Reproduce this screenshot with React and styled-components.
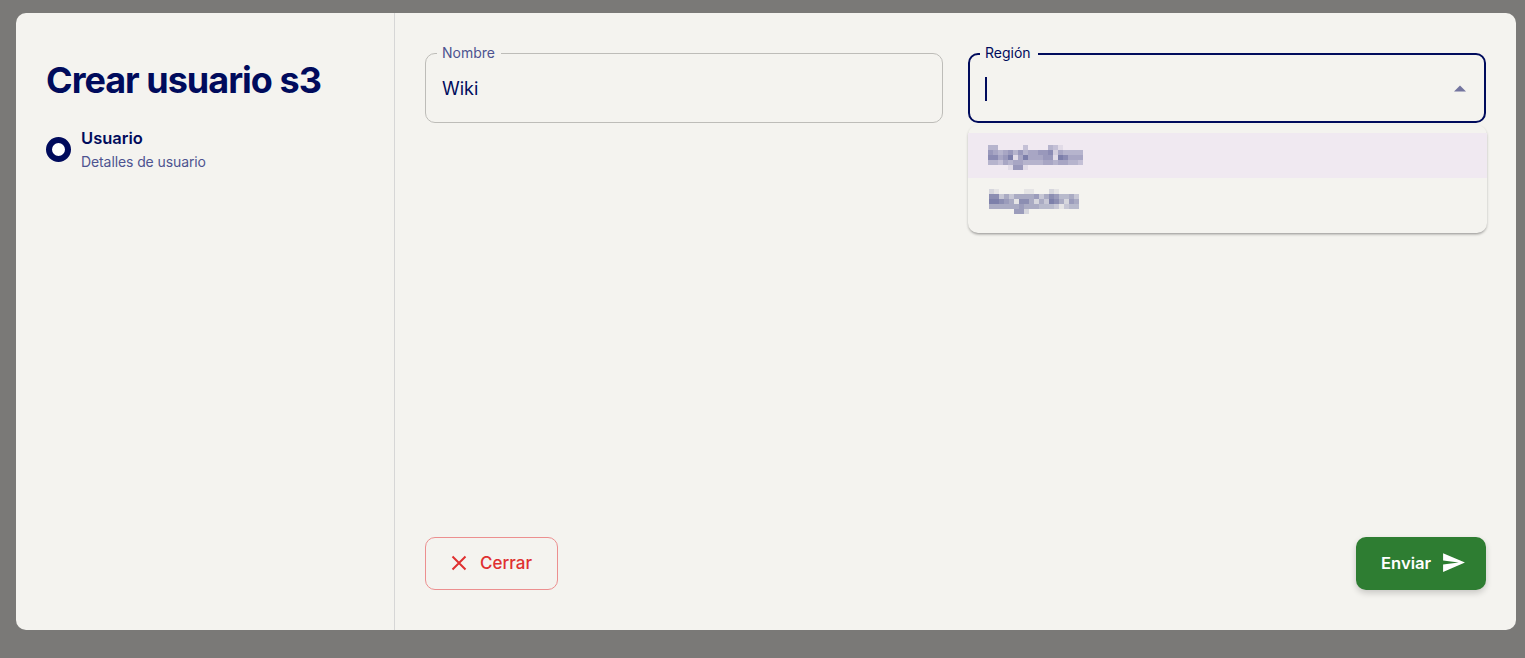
import React from "react";
import styled, { createGlobalStyle } from "styled-components";

const Global = createGlobalStyle`
  html, body { margin: 0; padding: 0; height: 100%; background: #7a7977; }
  * { box-sizing: border-box; }
  #root { height: 100%; }
`;
const Backdrop = styled.div`
  height: 658px; padding: 13px 9px 28px 16px; background: #7a7977; overflow: hidden;
  font-family: Inter, "Liberation Sans", sans-serif; color: #000b5c;
`;
const Modal = styled.div`
  display: flex; height: 617px; background: #f4f3ef; border-radius: 10px; overflow: hidden;
`;
const Sidebar = styled.aside`
  width: 379px; flex: none; padding: 44px 30px 0; border-right: 1px solid #d6d6d6;
`;
const Title = styled.h1`
  margin: 0; font-size: 36px; line-height: 46px; font-weight: 700; letter-spacing: -1px; color: #000b5c;
`;
const Step = styled.div`
  display: flex; align-items: center; gap: 10px; margin-top: 23px;
`;
const StepDot = styled.span`
  width: 25px; height: 25px; border-radius: 50%; border: 6px solid #000b5c; background: #fff; flex: none;
`;
const StepText = styled.div`display: flex; flex-direction: column;`;
const StepName = styled.span`font-size: 16.5px; line-height: 24px; font-weight: 600;`;
const StepHint = styled.span`font-size: 14px; line-height: 22px; letter-spacing: -0.1px; color: #4d5390; padding-top: 1px;`;
const Main = styled.main`
  flex: 1; display: flex; flex-direction: column; justify-content: space-between; padding: 30px 30px 40px;
`;
const Fields = styled.div`display: grid; grid-template-columns: 1fr 1fr; gap: 25px;`;
const Field = styled.div`position: relative;`;
const Box = styled.fieldset`
  margin: 0; height: 80px; min-width: 0; padding-top: 0; padding-bottom: 8px;
  border: ${p => (p.$focus ? "2px solid #000b5c" : "1px solid #bdbcb8")};
  border-radius: 10px; display: flex; align-items: center; justify-content: space-between;
  padding-left: ${p => (p.$focus ? "15px" : "16px")};
  padding-right: ${p => (p.$focus ? "19px" : "16px")};
`;
const Legend = styled.legend`
  padding: ${p => (p.$focus ? "0 7px 0 5px" : "0 6px 0 5px")}; margin-left: -5px; font-size: 14px; line-height: 20px;
  height: ${p => (p.$focus ? "22px" : "20px")};
  color: ${p => (p.$focus ? "#000b5c" : "#4d5390")};
`;
const Value = styled.span`font-size: 18px; line-height: 24px; color: #000b5c;`;
const Caret = styled.span`width: 2px; height: 24px; background: #000b5c;`;
const Arrow = styled.svg`width: 24px; height: 24px; fill: #73759f; flex: none; margin-right: -7px;`;
const Menu = styled.div`
  position: absolute; left: 0; right: -1px; top: 82px; padding: 8px 0 10px; background: #f4f3ef;
  border-radius: 10px; box-shadow: 0 2px 3px -1px rgba(0,0,0,.35), 0 1px 3px rgba(0,0,0,.1);
`;
const Option = styled.div`
  display: flex; align-items: flex-start; height: 45px; padding: ${p => p.$top}px 0 0 ${p => p.$left}px;
  background: ${p => (p.$active ? "#f0e9f1" : "transparent")};
`;
const Actions = styled.div`display: flex; justify-content: space-between;`;
const Button = styled.button`
  display: flex; align-items: center; height: 53px; border-radius: 10px; font: inherit; font-size: 17px;
  font-weight: 500; background: transparent;
`;
const CloseButton = styled(Button)`
  width: 133px; padding: 0 0 2px 24px; gap: 12px; color: #df3030; border: 1px solid #ec8f8f;
  font-weight: 450;
`;
const SendButton = styled(Button)`
  width: 130px; padding: 0 0 2px 25px; gap: 10px; color: #fff; background: #2e7d32; border: 0; font-size: 16.6px; font-weight: 600;
  box-shadow: 0 3px 6px rgba(0,0,0,.18);
`;
const Mosaic = ({ cells, w }) => (
  <svg width={w} height={cells.length * 5} viewBox={`0 0 ${w} ${cells.length * 5}`}>
    {cells.flatMap((row, y) =>
      row.map((o, x) => o ? <rect key={`${x}-${y}`} x={x * 5} y={y * 5} width="5" height="5" fill="#5f6398" opacity={o / 10} /> : null)
    )}
  </svg>
);
const r1 = [
  [4,4,0,0,0,0,0,3,0,0,0,0,4,3,1,0,0,0,0],
  [6,5,4,5,6,4,6,4,5,5,6,6,7,2,5,4,4,4,4],
  [7,7,5,6,8,1,5,8,5,5,5,6,6,1,8,7,5,5,5],
  [4,4,3,5,4,5,5,4,4,4,4,5,5,4,5,5,4,4,3],
  [0,0,0,0,1,6,6,1,0,0,0,0,0,0,0,0,0,0,0],
];
const r2 = [
  [2,1,0,0,0,0,0,1,1,0,0,0,2,1,0,0,0,0],
  [7,7,3,5,3,5,5,5,5,6,3,5,7,6,4,4,5,3],
  [8,8,7,6,5,1,7,7,5,2,5,3,8,7,5,2,6,5],
  [5,5,5,5,5,5,6,5,5,5,4,4,4,3,1,3,4,4],
  [0,0,0,0,0,6,6,2,0,0,0,0,0,0,0,0,0,0],
];
export default function App() {
  return (
    <Backdrop>
      <Global />
      <Modal>
        <Sidebar>
          <Title>Crear usuario s3</Title>
          <Step>
            <StepDot />
            <StepText>
              <StepName>Usuario</StepName>
              <StepHint>Detalles de usuario</StepHint>
            </StepText>
          </Step>
        </Sidebar>
        <Main>
          <Fields>
            <Field>
              <Box>
                <Legend>Nombre</Legend>
                <Value>Wiki</Value>
              </Box>
            </Field>
            <Field>
              <Box $focus>
                <Legend $focus>Región</Legend>
                <Caret />
                <Arrow viewBox="0 0 24 24"><path d="M6 14.5l6-6 6 6z" /></Arrow>
              </Box>
              <Menu>
                <Option $active $top={12} $left={20}><Mosaic cells={r1} w={95} /></Option>
                <Option $top={11} $left={21}><Mosaic cells={r2} w={90} /></Option>
              </Menu>
            </Field>
          </Fields>
          <Actions>
            <CloseButton>
              <svg width="18" height="18" viewBox="0 0 18 18" fill="none" stroke="#df3030" strokeWidth="2"><path d="M2.5 2.5l13 13M15.5 2.5l-13 13" /></svg>
              Cerrar
            </CloseButton>
            <SendButton>
              Enviar
              <svg width="25" height="25" viewBox="0 0 24 24" fill="#fff"><path d="M2.01 21 23 12 2.01 3 2 10l15 2-15 2z" /></svg>
            </SendButton>
          </Actions>
        </Main>
      </Modal>
    </Backdrop>
  );
}
